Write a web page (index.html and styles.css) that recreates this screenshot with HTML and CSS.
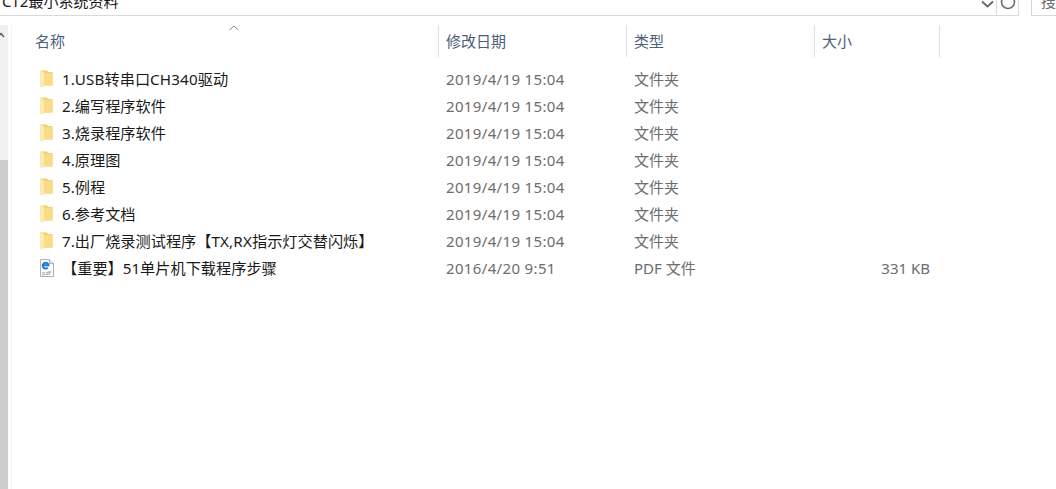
FILE: index.html
```html
<!DOCTYPE html>
<html lang="zh-CN">
<head>
  <meta charset="UTF-8" />
  <title>CT2最小系统资料</title>
  <link rel="stylesheet" href="styles.css">
</head>
<body>
  <svg class="icon-defs" width="0" height="0">
    <defs>
      <symbol id="folder" viewBox="0 0 13 18">
        <path d="M1 0.500h6l1 1.500h4.500v13.500h-11.500z" fill="#f1cf6c"/>
        <path d="M3.500 3h9v12.500h-9z" fill="#f9dc85"/>
        <path d="M.5 .5l3.500 1.500v13.500l-2.500 2-1-1.500z" fill="#fdecb0" stroke="#f4dc94" stroke-width=".5"/>
      </symbol>
    </defs>
  </svg>

  <div class="topbar">
    <div class="address">
      <span class="address-text">CT2最小系统资料</span>
      <svg class="chevron" width="13" height="9" viewBox="0 0 13 9"><path d="M1 1.500l5.500 5 5.500-5" fill="none" stroke="#666" stroke-width="1.800"/></svg>
      <div class="refresh">
        <svg width="18" height="15" viewBox="0 0 18 15"><circle cx="9" cy="2" r="6.500" fill="none" stroke="#707070" stroke-width="1.600"/></svg>
      </div>
    </div>
    <div class="search"><span>搜</span></div>
  </div>

  <div class="main">
    <div class="scrollbar">
      <svg class="scroll-up" width="8" height="8" viewBox="0 0 8 8"><path d="M-2 5l3-3.500 3 3.500" fill="none" stroke="#555" stroke-width="1.400"/></svg>
      <div class="scroll-thumb"></div>
    </div>
    <div class="pane-line"></div>
    <div class="list">
      <div class="columns">
        <div class="col col-name">名称
          <svg class="sort" width="10" height="6" viewBox="0 0 10 6"><path d="M.5 5l4.500-4 4.500 4" fill="none" stroke="#888" stroke-width="1"/></svg>
        </div>
        <div class="col">修改日期</div>
        <div class="col">类型</div>
        <div class="col">大小</div>
      </div>

      <div class="rows">
        <div class="row"><svg class="ficon" width="13" height="18"><use href="#folder"/></svg><span class="name"><span class="latin">1.USB</span>转串口<span class="latin">CH340</span>驱动</span><span class="cell date">2019/4/19 15:04</span><span class="cell">文件夹</span><span></span></div>
        <div class="row"><svg class="ficon" width="13" height="18"><use href="#folder"/></svg><span class="name">2.编写程序软件</span><span class="cell date">2019/4/19 15:04</span><span class="cell">文件夹</span><span></span></div>
        <div class="row"><svg class="ficon" width="13" height="18"><use href="#folder"/></svg><span class="name">3.烧录程序软件</span><span class="cell date">2019/4/19 15:04</span><span class="cell">文件夹</span><span></span></div>
        <div class="row"><svg class="ficon" width="13" height="18"><use href="#folder"/></svg><span class="name">4.原理图</span><span class="cell date">2019/4/19 15:04</span><span class="cell">文件夹</span><span></span></div>
        <div class="row"><svg class="ficon" width="13" height="18"><use href="#folder"/></svg><span class="name">5.例程</span><span class="cell date">2019/4/19 15:04</span><span class="cell">文件夹</span><span></span></div>
        <div class="row"><svg class="ficon" width="13" height="18"><use href="#folder"/></svg><span class="name">6.参考文档</span><span class="cell date">2019/4/19 15:04</span><span class="cell">文件夹</span><span></span></div>
        <div class="row"><svg class="ficon" width="13" height="18"><use href="#folder"/></svg><span class="name">7.出厂烧录测试程序【<span class="latin">TX,RX</span>指示灯交替闪烁】</span><span class="cell date">2019/4/19 15:04</span><span class="cell">文件夹</span><span></span></div>
        <div class="row">
          <svg class="ficon" width="14" height="18" viewBox="0 0 14 18">
            <path d="M.5 .5h9l4 4v13h-13z" fill="#fff" stroke="#b0b0b0"/>
            <path d="M9.500 .5v4h4" fill="#e8e8e8" stroke="#b0b0b0"/>
            <path d="M2.800 6.300h5.700a2.900 2.900 0 1 0-.8 2.300" fill="none" stroke="#1b78d0" stroke-width="1.900"/>
            <text class="pdf-label" x="2" y="16">pdf</text>
          </svg>
          <span class="name">【重要】51单片机下载程序步骤</span><span class="cell date">2016/4/20 9:51</span><span class="cell">PDF 文件</span><span class="cell size">331 KB</span>
        </div>
      </div>
    </div>
  </div>
</body>
</html>
```

FILE: styles.css
```css
body {
  margin: 0;
  height: 489px;
  overflow: hidden;
  background-color: #fff;
  font-family: "Noto Sans", "Noto Sans CJK SC", sans-serif;
  font-size: 15px;
  color: #1a1a1a;
}
.icon-defs {
  display: block;
  height: 0;
}
.topbar {
  display: flex;
  height: 16px;
  overflow: hidden;
}
.address {
  width: 1019px;
  box-sizing: border-box;
  display: flex;
  align-items: flex-start;
  border-bottom: 1px solid #d9d9d9;
  border-right: 1px solid #d9d9d9;
}
.address-text {
  flex: 1;
  padding-left: 2px;
  line-height: 20px;
  margin-top: -9px;
  white-space: nowrap;
}
.chevron {
  margin-right: 2px;
}
.refresh {
  width: 21px;
  height: 15px;
  border-left: 1px solid #d9d9d9;
  display: flex;
  justify-content: center;
}
.search {
  margin-left: 12px;
  flex: 1;
  border-left: 1px solid #d9d9d9;
  border-bottom: 1px solid #d9d9d9;
  padding-left: 9px;
  color: #6d6d6d;
  line-height: 20px;
  overflow: hidden;
}
.search span {
  display: block;
  margin-top: -9px;
}
.main {
  display: flex;
  height: 473px;
}
.scrollbar {
  width: 8px;
  margin-top: 9px;
  background-color: #f0f0f0;
  display: flex;
  flex-direction: column;
}
.scroll-up {
  margin-top: 7px;
  flex: none;
}
.scroll-thumb {
  margin-top: 120px;
  flex: 1;
  background-color: #cdcdcd;
}
.pane-line {
  width: 1px;
  margin: 9px 0 0 3px;
  background-color: #f2f2f2;
}
.list {
  flex: 1;
  padding-top: 9px;
}
.columns,
.row {
  display: grid;
  grid-template-columns: 427px 188px 188px 125px;
}
.columns {
  height: 32px;
}
.col {
  position: relative;
  border-right: 1px solid #e0e0e0;
  box-sizing: border-box;
  padding-left: 7px;
  line-height: 32px;
  color: #4c607a;
}
.col-name {
  padding-left: 23px;
}
.sort {
  position: absolute;
  left: 217px;
  top: 0;
}
.rows {
  padding-top: 9px;
}
.row {
  height: 27px;
  align-items: center;
  position: relative;
  line-height: 27px;
}
.ficon {
  position: absolute;
  left: 28px;
  top: 4px;
}
.pdf-label {
  font-size: 5.500px;
  fill: #8a8a8a;
}
.name {
  padding-left: 50px;
  white-space: nowrap;
  font-size: 15.200px;
}
.latin {
  letter-spacing: .15px;
}
.cell {
  padding-left: 7px;
  color: #6d6d6d;
}
.date {
  letter-spacing: .35px;
}
.size {
  text-align: right;
  padding-right: 10px;
}
```
